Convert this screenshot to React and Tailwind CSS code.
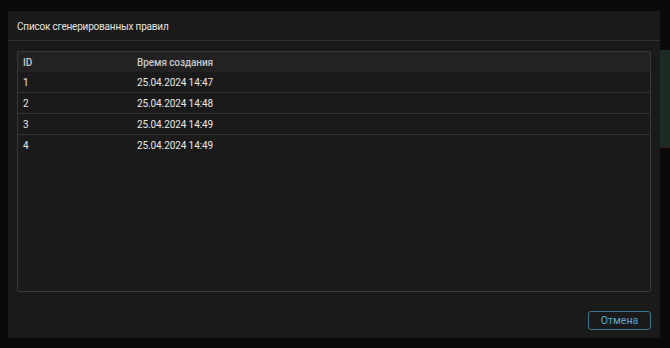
import React from 'react';

const rules = [
  { id: 1, createdAt: '25.04.2024 14:47' },
  { id: 2, createdAt: '25.04.2024 14:48' },
  { id: 3, createdAt: '25.04.2024 14:49' },
  { id: 4, createdAt: '25.04.2024 14:49' },
];

export default function App() {
  return (
    <div
      className="w-[670px] h-[348px] bg-[#0a0a0a] flex overflow-hidden"
      style={{ fontFamily: 'Roboto, "Liberation Sans", sans-serif' }}
    >
      <div className="w-[8px] shrink-0" />
      <div className="w-[652px] shrink-0 pt-[11px]">
        <div className="h-[327px] bg-[#1a1a1a] flex flex-col rounded-[2px]">
          <div className="h-[30px] px-[9px] pt-[2px] flex items-center border-b border-[#2e2e2e] text-[10px] tracking-[-0.2px] text-[#e4e4e4]">
            Список сгенерированных правил
          </div>
          <div className="flex-1 px-[9px] pt-[10px] flex flex-col">
            <div className="h-[241px] border border-[#383838] rounded-[2px] overflow-hidden">
              <div className="h-[20px] bg-[#222222] flex items-center text-[10px] tracking-[-0.1px] text-[#c8c8c8] font-medium">
                <div className="w-[119px] pl-[5px]">ID</div>
                <div>Время создания</div>
              </div>
              {rules.map((r, i) => (
                <div
                  key={r.id}
                  className={`h-[21px] flex items-center text-[10px] tracking-[-0.1px] text-[#e8e8e8] ${i < rules.length - 1 ? 'border-b border-[#333333]' : ''}`}
                >
                  <div className="w-[119px] pl-[5px]">{r.id}</div>
                  <div>{r.createdAt}</div>
                </div>
              ))}
            </div>
            <div className="flex-1 flex items-start justify-end pt-[19px]">
              <button className="w-[63px] h-[19px] border border-[#3a7590] rounded-[3px] text-[10.5px] text-[#5aa8d4] bg-transparent">
                Отмена
              </button>
            </div>
          </div>
        </div>
      </div>
      <div className="flex-1 pt-[50px]">
        <div className="h-[98px] bg-[#1c2a24] border-b border-[#3a1c1c]" />
      </div>
    </div>
  );
}
